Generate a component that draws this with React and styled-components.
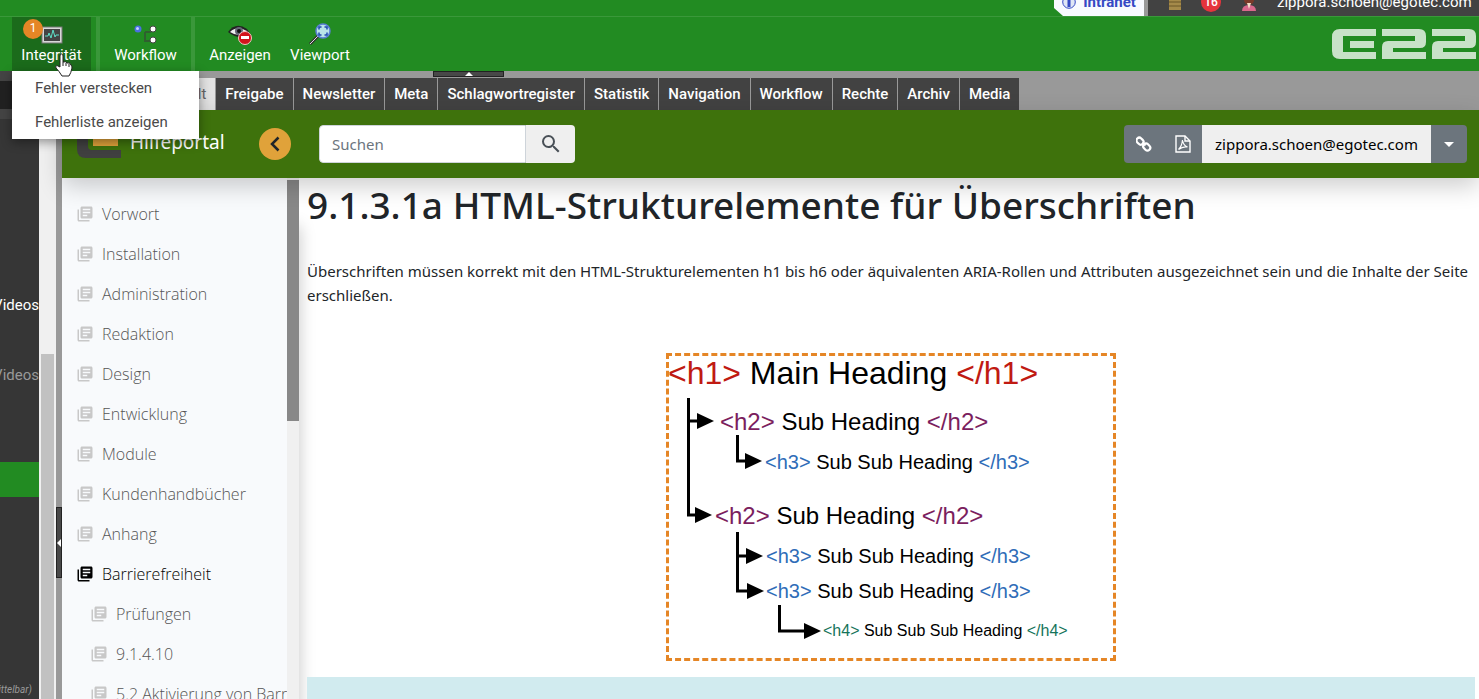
import React from 'react';
import styled, { createGlobalStyle } from 'styled-components';
import { MdLibraryBooks, MdSearch } from 'react-icons/md';

const roboto = 'Roboto, "Liberation Sans", sans-serif';
const noto = '"Noto Sans", "Open Sans", sans-serif';

const GlobalStyle = createGlobalStyle`
  * {
    box-sizing: border-box;
  }
  body {
    margin: 0;
    overflow: hidden;
    font-family: ${roboto};
    font-size: 15px;
  }
  button, input {
    font: inherit;
    border: 0;
    padding: 0;
    margin: 0;
  }
  a {
    color: inherit;
    text-decoration: none;
  }
  ul {
    list-style: none;
    margin: 0;
    padding: 0;
  }
`;

const Screen = styled.div`
  height: 100vh;
  display: flex;
  flex-direction: column;
`;

/* top strip */
const TopStrip = styled.header`
  height: 16px;
  flex-shrink: 0;
  display: flex;
  justify-content: flex-end;
  align-items: flex-end;
  overflow: hidden;
  background: #228b22;
`;
const SiteTab = styled.a`
  height: 29px;
  width: 90px;
  display: flex;
  align-items: center;
  justify-content: center;
  gap: 7px;
  font-weight: 700;
  color: #3549c4;
  background: #f8faff;
  clip-path: polygon(0 0, 100% 0, 100% 100%, 9px 100%, 0 21px);
`;
const UserArea = styled.div`
  height: 29px;
  flex-basis: 335px;
  display: flex;
  align-items: center;
  gap: 20px;
  padding-left: 21px;
  color: white;
  background: #424242;
  border-left: 4px solid #999;
`;
const MailCount = styled.span`
  width: 20px;
  height: 20px;
  line-height: 20px;
  border-radius: 50%;
  text-align: center;
  font-size: 12px;
  font-weight: 500;
  background: #e5343d;
`;

/* toolbar */
const Toolbar = styled.nav`
  height: 55px;
  flex-shrink: 0;
  display: flex;
  padding-left: 12px;
  background: #228b22;
  border-top: 1px solid #3a983a;
`;
const ToolGroup = styled.div`
  position: relative;
  display: flex;
  padding: 0 ${props => props.$pad || 0}px;
  margin-right: ${props => props.$gap || 0}px;
  & + & {
    border-left: 4px solid #3a983a;
  }
`;
const ToolButton = styled.button`
  position: relative;
  width: ${props => props.$width}px;
  display: flex;
  flex-direction: column;
  align-items: center;
  justify-content: flex-end;
  padding-bottom: 6px;
  line-height: 20px;
  color: white;
  cursor: pointer;
  background: ${props => (props.$active ? '#1b6b1b' : 'transparent')};
`;
const Badge = styled.span`
  position: absolute;
  top: 2px;
  left: 11px;
  width: 20px;
  height: 20px;
  line-height: 19px;
  border-radius: 50%;
  font-size: 12px;
  background: #e58626;
`;
const Pointer = styled.svg`
  position: absolute;
  z-index: 12;
  top: 36px;
  left: 43px;
`;
const Menu = styled.ul`
  position: absolute;
  z-index: 10;
  top: 54px;
  left: 0;
  width: 187px;
  background: white;
  box-shadow: 0 3px 10px rgba(0, 0, 0, 0.4);
`;
const MenuLink = styled.a`
  display: block;
  padding-left: 23px;
  line-height: 34px;
  color: #4a4a4a;
`;
const Brand = styled.svg`
  margin: 12px 3px 0 auto;
`;

/* work area */
const Work = styled.div`
  flex: 1;
  min-height: 0;
  display: flex;
  background: #999;
`;
const Tree = styled.aside`
  width: 39px;
  overflow: hidden;
  background: #363636;
  border-top: 10px solid #444;
`;
const TreeHead = styled.div`
  height: 38px;
  background: #212121;
  border-bottom: 10px solid #444;
`;
const TreeList = styled.ul`
  padding-top: 168px;
`;
const TreeRow = styled.li`
  height: 35px;
  display: flex;
  align-items: center;
  justify-content: flex-end;
  white-space: nowrap;
  padding-right: ${props => (props.$small ? 7 : 0)}px;
  font-size: ${props => (props.$small ? 10 : 15)}px;
  font-style: ${props => (props.$small ? 'italic' : 'normal')};
  color: ${props => (props.$dim ? '#999' : 'white')};
  background: ${props => (props.$selected ? '#228b22' : 'transparent')};
`;
const TreeScroll = styled.div`
  width: 17px;
  padding: 283px 2px 0;
  background: #f0f0f0;
`;
const Thumb = styled.div`
  height: ${props => props.$height};
  background: ${props => props.$color};
`;
const Splitter = styled.div`
  width: 6px;
  display: flex;
  flex-direction: column;
  padding-top: 436px;
`;
const SplitHandle = styled.button`
  width: ${props => (props.$wide ? 71 : 6)}px;
  height: ${props => (props.$wide ? 6 : 71)}px;
  display: flex;
  align-items: center;
  justify-content: center;
  border: 1px solid #222;
  background: #484848;
`;
const Main = styled.div`
  flex: 1;
  min-width: 0;
  display: flex;
  flex-direction: column;
`;
const TabsEdge = styled.div`
  height: 7px;
  flex-shrink: 0;
  padding-left: 371px;
`;
const Tabs = styled.div`
  display: flex;
  gap: 1px;
  padding-left: 98px;
`;
const Tab = styled.button`
  height: 32px;
  padding: 0 9px;
  font-weight: ${props => (props.$current ? 400 : 500)};
  color: ${props => (props.$current ? '#666' : 'white')};
  background: ${props => (props.$current ? '#e2e2e2' : '#424242')};
`;

/* help portal page */
const PageHead = styled.header`
  position: relative;
  z-index: 2;
  height: 68px;
  flex-shrink: 0;
  display: flex;
  align-items: center;
  padding: 0 12px 0 14px;
  font-family: ${noto};
  background: #3e720c;
  box-shadow: 0 8px 24px rgba(0, 0, 0, 0.2);
`;
const PortalName = styled.a`
  width: 137px;
  padding: 0 0 4px 8px;
  font-size: 19px;
  color: white;
`;
const RoundButton = styled.button`
  width: 32px;
  height: 32px;
  display: flex;
  align-items: center;
  justify-content: center;
  border-radius: 50%;
  background: #e0a23a;
`;
const Search = styled.form`
  display: flex;
  height: 38px;
  margin-left: 28px;
  border-radius: 4px;
  overflow: hidden;
`;
const SearchInput = styled.input`
  width: 207px;
  padding: 0 12px;
  font-size: 15px;
  background: white;
  border: 1px solid #ced4da;
  border-radius: 4px 0 0 4px;
  &::placeholder {
    color: #6c757d;
    opacity: 1;
  }
`;
const SearchButton = styled.button`
  width: 49px;
  display: flex;
  align-items: center;
  justify-content: center;
  color: #495057;
  background: #efefef;
`;
const UserGroup = styled.div`
  display: flex;
  height: 38px;
  margin-left: auto;
  border-radius: 4px;
  overflow: hidden;
`;
const UserButton = styled.button`
  min-width: ${props => props.$width}px;
  display: flex;
  align-items: center;
  justify-content: center;
  font-size: 15px;
  color: ${props => (props.$light ? 'black' : 'white')};
  background: ${props => (props.$light ? '#efefef' : '#6c757d')};
`;
const PageBody = styled.div`
  flex: 1;
  min-height: 0;
  display: flex;
  font-family: ${noto};
  background: white;
`;
const SideNav = styled.nav`
  position: relative;
  z-index: 1;
  width: 225px;
  padding-top: 16px;
  overflow: hidden;
  background: #f8fafc;
`;
const SideLink = styled.a`
  height: 40px;
  display: flex;
  align-items: center;
  gap: 8px;
  padding-left: ${props => (props.$deep ? 28 : 14)}px;
  white-space: nowrap;
  font-family: "Open Sans", sans-serif;
  font-size: 16px;
  font-weight: 300;
  color: ${props => (props.$current ? 'black' : '#555')};
  svg {
    flex-shrink: 0;
    color: ${props => (props.$current ? 'black' : '#c8c8c8')};
  }
`;
const SideScroll = styled.div`
  width: 12px;
  padding-top: 2px;
  background: #f0f0f0;
  box-shadow: 0 48px 16px rgba(0, 0, 0, 0.25);
`;
const Article = styled.main`
  flex: 1;
  min-width: 0;
  overflow: hidden;
  padding: 3px 4px 0 8px;
  color: #212529;
`;
const Title = styled.h1`
  margin: 0 0 30px;
  font-size: 37px;
  font-weight: 500;
  line-height: 48px;
`;
const Intro = styled.p`
  margin: 0 0 46px;
  font-size: 15px;
  line-height: 24px;
`;
const Figure = styled.figure`
  width: 450px;
  margin: 0 auto 16px;
  border: 3px dashed #e58626;
  svg {
    display: block;
  }
`;
const Notice = styled.div`
  height: 60px;
  background: #d1ebef;
`;

const MonitorIcon = () => (
  <svg width="22" height="20" viewBox="0 0 22 20">
    <rect x="1" y="2" width="20" height="16" fill="#d8d8d8" stroke="#777" />
    <rect x="3" y="4" width="16" height="12" fill="#444" />
    <path d="M4 11h3l1-3 2 5 2-8 2 7 1-2h3" fill="none" stroke="#5fe0c8" />
  </svg>
);

const WorkflowIcon = () => (
  <svg width="24" height="20" viewBox="0 0 24 20">
    <path d="M11 7v9h6M11 7h6" fill="none" stroke="#2f5f2f" strokeWidth="2" />
    <circle cx="4" cy="4" r="3.5" fill="#4b6fe0" />
    <circle cx="3.5" cy="3.5" r="1.5" fill="#c4d2ff" />
    <circle cx="19" cy="4" r="3" fill="white" stroke="#444" />
    <circle cx="19" cy="15" r="3" fill="white" stroke="#444" />
  </svg>
);

const EyeIcon = () => (
  <svg width="26" height="22" viewBox="0 0 26 22">
    <path d="M1 9Q9-2 20 6L24 12Q12 18 1 9z" fill="#222" />
    <path d="M3 9Q10 2 20 8Q12 15 3 9z" fill="#eee" />
    <circle cx="12" cy="8" r="4" fill="#667" />
    <circle cx="12" cy="8" r="2" fill="#111" />
    <circle cx="18" cy="15" r="6.5" fill="#d2141c" stroke="#f3c6c6" />
    <rect x="14" y="13" width="8" height="3" fill="white" />
  </svg>
);

const LensIcon = () => (
  <svg width="22" height="22" viewBox="0 0 22 22">
    <path d="M1 21l8-8" stroke="#333" strokeWidth="3" />
    <path d="M1 21l8-8" stroke="#ddd" />
    <circle cx="14" cy="8" r="7" fill="#b8e4e8" stroke="#5c7fd6" strokeWidth="1.5" />
    <path
      d="M10 6.500v-2.500h2.500M15.500 4h2.500v2.500M18 9.500v2.500h-2.500M12.500 12h-2.500v-2.500"
      fill="none"
      stroke="#1d46b0"
      strokeWidth="1.5"
    />
  </svg>
);

const E22Logo = () => (
  <Brand width="144" height="30" viewBox="0 0 144 30" fill="#c8e2c8">
    <path d="M8 0H44V7H11V23H44V30H8Q0 30 0 22V8Q0 0 8 0z" />
    <rect x="18" y="12" width="24" height="7" />
    {[50, 100].map(x => (
      <path
        key={x}
        transform={`translate(${x} 0)`}
        d="M0 0H37Q44 0 44 7V13Q44 19 38 19H11V23H44V30H0V18Q0 12 6 12H33V7H0z"
      />
    ))}
  </Brand>
);

const PortalLogo = () => (
  <svg width="46" height="46" viewBox="0 0 46 46">
    <path d="M1 4V28Q1 37 10 37H45V29H16Q12 29 12 25V4z" fill="#404040" />
    <rect x="17" y="6" width="25" height="19" fill="#e0a23a" />
  </svg>
);

const ChevronIcon = () => (
  <svg width="12" height="16" viewBox="0 0 12 16">
    <path d="M9.5 1.5L3 8l6.5 6.5" fill="none" stroke="#212529" strokeWidth="2.5" />
  </svg>
);

const ChainIcon = () => (
  <svg width="16" height="16" viewBox="0 0 16 16" fill="none" stroke="white" strokeWidth="2.2">
    <rect x="-1" y="2.6" width="7.6" height="5.6" rx="2.8" transform="rotate(45 3 5) translate(1 -1)" />
    <rect x="7" y="8.4" width="7.6" height="5.6" rx="2.8" transform="rotate(45 11 11)" />
    <path d="M6.500 6.500l3 3" strokeWidth="2" />
  </svg>
);

const PdfIcon = () => (
  <svg width="16" height="18" viewBox="0 0 16 18" fill="none" stroke="white" strokeWidth="1.4">
    <path d="M1 1h9l5 5v11H1z" />
    <path d="M10 1v5h5" />
    <path d="M3.500 14.500Q7 11 7.500 5Q8 10 12.500 12Q8 11 3.500 14.500z" strokeWidth="1.200" />
  </svg>
);

const outline = [
  { tag: 'h1', label: 'Main Heading', x: -1, y: 28, size: 32, color: '#c01a12' },
  { tag: 'h2', label: 'Sub Heading', x: 51, y: 74, size: 24, color: '#7b1e5e' },
  { tag: 'h3', label: 'Sub Sub Heading', x: 96, y: 113, size: 20, color: '#2f6db8' },
  { tag: 'h2', label: 'Sub Heading', x: 46, y: 168, size: 24, color: '#7b1e5e' },
  { tag: 'h3', label: 'Sub Sub Heading', x: 97, y: 207, size: 20, color: '#2f6db8' },
  { tag: 'h3', label: 'Sub Sub Heading', x: 97, y: 242, size: 20, color: '#2f6db8' },
  { tag: 'h4', label: 'Sub Sub Sub Heading', x: 154, y: 280, size: 16, color: '#14745a' }
];
const arrows = [[45, 65], [93, 105], [43, 159], [94, 200], [95, 235], [152, 275]];

const HeadingDiagram = () => (
  <svg width="444" height="302" viewBox="0 0 444 302" fontFamily='"Liberation Sans", Arial, sans-serif'>
    <path
      d="M19.500 42V159H30M19.500 65H30M68.500 79V105H78M68.500 176V235H80M68.500 200H80M110.500 249V275H137"
      fill="none"
      stroke="black"
      strokeWidth="3"
    />
    {arrows.map(([x, y]) => (
      <path key={y} d={`M${x} ${y}l-17-8v16z`} />
    ))}
    {outline.map(row => (
      <text key={row.y} x={row.x} y={row.y} fontSize={row.size}>
        <tspan fill={row.color}>{`<${row.tag}>`}</tspan>
        {` ${row.label} `}
        <tspan fill={row.color}>{`</${row.tag}>`}</tspan>
      </text>
    ))}
  </svg>
);

const tabs = [
  'Inhalt', 'Freigabe', 'Newsletter', 'Meta', 'Schlagwortregister', 'Statistik',
  'Navigation', 'Workflow', 'Rechte', 'Archiv', 'Media'
];
const chapters = [
  { name: 'Vorwort' },
  { name: 'Installation' },
  { name: 'Administration' },
  { name: 'Redaktion' },
  { name: 'Design' },
  { name: 'Entwicklung' },
  { name: 'Module' },
  { name: 'Kundenhandbücher' },
  { name: 'Anhang' },
  { name: 'Barrierefreiheit', current: true },
  { name: 'Prüfungen', deep: true },
  { name: '9.1.4.10', deep: true },
  { name: '5.2 Aktivierung von Barrierefreiheit', deep: true }
];

const App = () => (
  <Screen>
    <GlobalStyle />
    <TopStrip>
      <SiteTab href="#intranet">
        <svg width="14" height="14" viewBox="0 0 14 14">
          <circle cx="7" cy="7" r="6.3" fill="#dfe6f5" stroke="#3549c4" />
          <path d="M7 3v9" stroke="#3549c4" strokeWidth="3" />
        </svg>
        Intranet
      </SiteTab>
      <UserArea>
        <svg width="12" height="18" viewBox="0 0 12 18">
          <path d="M0 0h12v17H0z" fill="#a58a4a" />
          <path d="M0 5h12M0 9h12M0 13h12" stroke="#6b5626" />
        </svg>
        <MailCount>16</MailCount>
        <svg width="16" height="20" viewBox="0 0 16 20">
          <circle cx="8" cy="8" r="5" fill="#7a3a2a" />
          <path d="M1 19q0-6 7-6t7 6z" fill="#d9688c" />
          <path d="M6 11h4l-2 6z" fill="#f6dcc8" />
        </svg>
        <span>zippora.schoen@egotec.com</span>
      </UserArea>
    </TopStrip>
    <Toolbar>
      <ToolGroup $gap={5}>
        <ToolButton $active $width={79}>
          <MonitorIcon />
          <Badge>1</Badge>
          Integrität
        </ToolButton>
        <Menu>
          <li><MenuLink href="#verstecken">Fehler verstecken</MenuLink></li>
          <li><MenuLink href="#liste">Fehlerliste anzeigen</MenuLink></li>
        </Menu>
        <Pointer width="18" height="24" viewBox="0 0 18 24">
          <path
            d="M5 14V3q0-2 1.500-2T8 3v6q3-1 4 1 3-1 4 2 1 1 1 3-1 5-3 8H7Q4 18 1 15q-1-2 1-2.500z"
            fill="white"
            stroke="#222"
          />
          <path d="M8 9v4M11 10v3M14 11v3" stroke="#222" />
        </Pointer>
      </ToolGroup>
      <ToolGroup>
        <ToolButton $width={91}>
          <WorkflowIcon />
          Workflow
        </ToolButton>
      </ToolGroup>
      <ToolGroup $pad={5}>
        <ToolButton $width={80}>
          <EyeIcon />
          Anzeigen
        </ToolButton>
        <ToolButton $width={80}>
          <LensIcon />
          Viewport
        </ToolButton>
      </ToolGroup>
      <E22Logo />
    </Toolbar>
    <Work>
      <Tree>
        <TreeHead />
        <TreeList>
          <TreeRow>Videos</TreeRow>
          <TreeRow />
          <TreeRow $dim>Videos</TreeRow>
          <TreeRow />
          <TreeRow />
          <TreeRow $selected />
          <TreeRow />
          <TreeRow />
          <TreeRow />
          <TreeRow />
          <TreeRow />
          <TreeRow $dim $small>(unmittelbar)</TreeRow>
        </TreeList>
      </Tree>
      <TreeScroll>
        <Thumb $height="100%" $color="#c1c1c1" />
      </TreeScroll>
      <Splitter>
        <SplitHandle aria-label="Baum einklappen">
          <svg width="4" height="8" viewBox="0 0 4 8"><path d="M4 0v8L0 4z" fill="white" /></svg>
        </SplitHandle>
      </Splitter>
      <Main>
        <TabsEdge>
          <SplitHandle $wide aria-label="Leiste einklappen">
            <svg width="8" height="4" viewBox="0 0 8 4"><path d="M0 4h8L4 0z" fill="white" /></svg>
          </SplitHandle>
        </TabsEdge>
        <Tabs>
          {tabs.map((tab, i) => (
            <Tab key={tab} $current={i === 0}>{tab}</Tab>
          ))}
        </Tabs>
        <PageHead>
          <PortalLogo />
          <PortalName href="#start">Hilfeportal</PortalName>
          <RoundButton aria-label="Navigation einklappen">
            <ChevronIcon />
          </RoundButton>
          <Search>
            <SearchInput aria-label="Suchen" placeholder="Suchen" />
            <SearchButton type="button" aria-label="Suche starten">
              <MdSearch size={24} />
            </SearchButton>
          </Search>
          <UserGroup>
            <UserButton $width={40} aria-label="Link"><ChainIcon /></UserButton>
            <UserButton $width={38} aria-label="PDF"><PdfIcon /></UserButton>
            <UserButton $light $width={229}>zippora.schoen@egotec.com</UserButton>
            <UserButton $width={36} aria-label="Mehr">
              <svg width="10" height="5" viewBox="0 0 10 5"><path d="M0 0h10L5 5z" fill="white" /></svg>
            </UserButton>
          </UserGroup>
        </PageHead>
        <PageBody>
          <SideNav>
            {chapters.map(item => (
              <SideLink key={item.name} href="#kapitel" $deep={item.deep} $current={item.current}>
                <MdLibraryBooks size={18} />
                {item.name}
              </SideLink>
            ))}
          </SideNav>
          <SideScroll>
            <Thumb $height="241px" $color="#888" />
          </SideScroll>
          <Article>
            <Title>9.1.3.1a HTML-Strukturelemente für Überschriften</Title>
            <Intro>
              Überschriften müssen korrekt mit den HTML-Strukturelementen h1 bis h6 oder äquivalenten
              ARIA-Rollen und Attributen ausgezeichnet sein und die Inhalte der Seite erschließen.
            </Intro>
            <Figure>
              <HeadingDiagram />
            </Figure>
            <Notice />
          </Article>
        </PageBody>
      </Main>
    </Work>
  </Screen>
);

export default App;
